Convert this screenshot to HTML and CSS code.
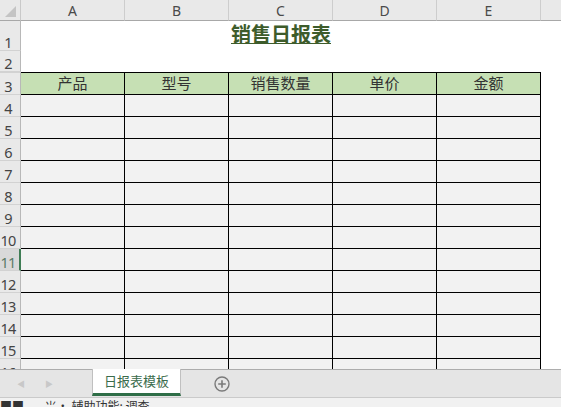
FILE: index.html
```html
<!DOCTYPE html>
<html lang="zh-CN">
<head>
  <meta charset="UTF-8">
  <title>销售日报表</title>
  <link rel="stylesheet" href="styles.css">
</head>
<body>
<div class="app">
  <!-- 表格区域 -->
  <div class="sheet">
    <div class="corner"><span class="tri"></span></div>
    <div class="colhead">A</div>
    <div class="colhead">B</div>
    <div class="colhead">C</div>
    <div class="colhead">D</div>
    <div class="colhead">E</div>
    <div class="colhead last"></div>

    <div class="rn">1</div>
    <div class="title"><span>销售日报表</span></div>
    <div class="blank"></div>

    <div class="rn">2</div>
    <div class="blank wide"></div>

    <div class="rn r3">3</div>
    <div class="h">产品</div>
    <div class="h">型号</div>
    <div class="h">销售数量</div>
    <div class="h">单价</div>
    <div class="h">金额</div>
    <div class="blank"></div>

    <div class="rn">4</div><div class="c"></div><div class="c"></div><div class="c"></div><div class="c"></div><div class="c"></div><div class="blank"></div>
    <div class="rn">5</div><div class="c"></div><div class="c"></div><div class="c"></div><div class="c"></div><div class="c"></div><div class="blank"></div>
    <div class="rn">6</div><div class="c"></div><div class="c"></div><div class="c"></div><div class="c"></div><div class="c"></div><div class="blank"></div>
    <div class="rn">7</div><div class="c"></div><div class="c"></div><div class="c"></div><div class="c"></div><div class="c"></div><div class="blank"></div>
    <div class="rn">8</div><div class="c"></div><div class="c"></div><div class="c"></div><div class="c"></div><div class="c"></div><div class="blank"></div>
    <div class="rn">9</div><div class="c"></div><div class="c"></div><div class="c"></div><div class="c"></div><div class="c"></div><div class="blank"></div>
    <div class="rn">10</div><div class="c"></div><div class="c"></div><div class="c"></div><div class="c"></div><div class="c"></div><div class="blank"></div>
    <div class="rn active">11</div><div class="c"></div><div class="c"></div><div class="c"></div><div class="c"></div><div class="c"></div><div class="blank"></div>
    <div class="rn">12</div><div class="c"></div><div class="c"></div><div class="c"></div><div class="c"></div><div class="c"></div><div class="blank"></div>
    <div class="rn">13</div><div class="c"></div><div class="c"></div><div class="c"></div><div class="c"></div><div class="c"></div><div class="blank"></div>
    <div class="rn">14</div><div class="c"></div><div class="c"></div><div class="c"></div><div class="c"></div><div class="c"></div><div class="blank"></div>
    <div class="rn">15</div><div class="c"></div><div class="c"></div><div class="c"></div><div class="c"></div><div class="c"></div><div class="blank"></div>
    <div class="rn">16</div><div class="c"></div><div class="c"></div><div class="c"></div><div class="c"></div><div class="c"></div><div class="blank"></div>
  </div>

  <!-- 工作表标签 -->
  <div class="tabbar">
    <div class="nav">
      <span class="arrow">&#9664;</span>
      <span class="arrow">&#9654;</span>
    </div>
    <div class="tab">日报表模板</div>
    <div class="add">
      <svg width="16" height="16" viewBox="0 0 16 16">
        <circle cx="8" cy="8" r="7" fill="none" stroke="#7a7a7a" stroke-width="1.4"/>
        <path d="M8 4.2v7.6M4.2 8h7.6" stroke="#7a7a7a" stroke-width="1.6"/>
      </svg>
    </div>
  </div>

  <!-- 状态栏 -->
  <div class="status">
    <span class="blk">■■</span>
    <span class="acc">⺌· 辅助功能: 调查</span>
  </div>
</div>
</body>
</html>
```
FILE: styles.css
```css
body {
  margin: 0;
  font-family: "Noto Sans", "Noto Sans CJK SC", sans-serif;
  background: #fff;
}

.app {
  width: 561px;
  height: 407px;
  display: flex;
  flex-direction: column;
  overflow: hidden;
}

.sheet {
  height: 371px;
  overflow: hidden;
  display: grid;
  grid-template-columns: 21px repeat(5, 104px) 1fr;
  grid-template-rows: 21px 30px 21px 23px repeat(13, 22px);
}

/* 列标题 */
.corner {
  background: #e9e9e9;
  border-right: 1px solid #c9c9c9;
  border-bottom: 1px solid #a8a8a8;
  position: relative;
}
.tri {
  position: absolute;
  left: 5px;
  top: 6px;
  width: 0;
  height: 0;
  border-left: 11px solid transparent;
  border-bottom: 11px solid #c4c4c4;
}
.colhead {
  background: #e9e9e9;
  border-right: 1px solid #cdcdcd;
  border-bottom: 1px solid #a8a8a8;
  color: #4a4a4a;
  font-size: 14px;
  line-height: 22px;
  text-align: center;
}
.colhead.last {
  border-right: none;
}

/* 行号 */
.rn {
  background: #e9e9e9;
  border-right: 1px solid #b8b8b8;
  border-bottom: 1px solid #d2d2d2;
  color: #444;
  font-size: 14.5px;
  letter-spacing: -0.7px;
  line-height: 16px;
  display: flex;
  align-items: flex-end;
  justify-content: center;
  padding-right: 4px;
  white-space: nowrap;
}
.rn.r3 {
  border-top: 1px solid #d2d2d2;
}
.rn.active {
  background: #d9d9d9;
  color: #5b7a66;
  border-right: 2px solid #3f7d55;
  padding-right: 3px;
}

.title {
  grid-column: span 5;
  display: flex;
  justify-content: center;
  align-items: flex-start;
  padding-top: 1px;
}
.title span {
  font-family: "Noto Sans CJK SC", sans-serif;
  font-weight: 700;
  font-size: 20px;
  line-height: 24px;
  color: #3d5c2b;
  text-decoration: underline;
  text-decoration-thickness: 1px;
  text-underline-offset: 1px;
}

.blank {
  background: #fff;
}
.blank.wide {
  grid-column: span 6;
}

.h {
  background: #c6e0b4;
  border-top: 1px solid #000;
  border-right: 1px solid #000;
  border-bottom: 1px solid #000;
  font-family: "Noto Sans CJK SC", sans-serif;
  font-size: 15px;
  line-height: 20px;
  color: #333;
  text-align: center;
}

.c {
  background: #f2f2f2;
  border-right: 1px solid #000;
  border-bottom: 1px solid #000;
}

/* 标签栏 */
.tabbar {
  height: 27px;
  background: #e5e5e5;
  border-top: 1px solid #adadad;
  border-bottom: 1px solid #cacaca;
  display: flex;
  align-items: stretch;
}
.nav {
  width: 92px;
  display: flex;
  align-items: center;
  gap: 20px;
  padding-left: 17px;
  box-sizing: border-box;
}
.arrow {
  color: #c8c8c8;
  font-size: 8px;
}
.tab {
  width: 89px;
  margin-top: -1px;
  background: #fff;
  border-left: 1px solid #c0c0c0;
  border-right: 1px solid #c0c0c0;
  border-bottom: 3px solid #2f6e47;
  box-sizing: border-box;
  height: 27px;
  font-family: "Noto Sans CJK SC", sans-serif;
  font-size: 13px;
  color: #3a6b4c;
  text-align: center;
  line-height: 24px;
}
.add {
  margin-left: 33px;
  display: flex;
  align-items: center;
}

/* 状态栏 */
.status {
  height: 8px;
  background: #f1f1f1;
  overflow: hidden;
  font-family: "Noto Sans CJK SC", sans-serif;
  font-size: 12px;
  line-height: 14px;
  color: #333;
  padding-top: 1px;
  white-space: nowrap;
}
.blk {
  margin-right: 18px;
}
```
